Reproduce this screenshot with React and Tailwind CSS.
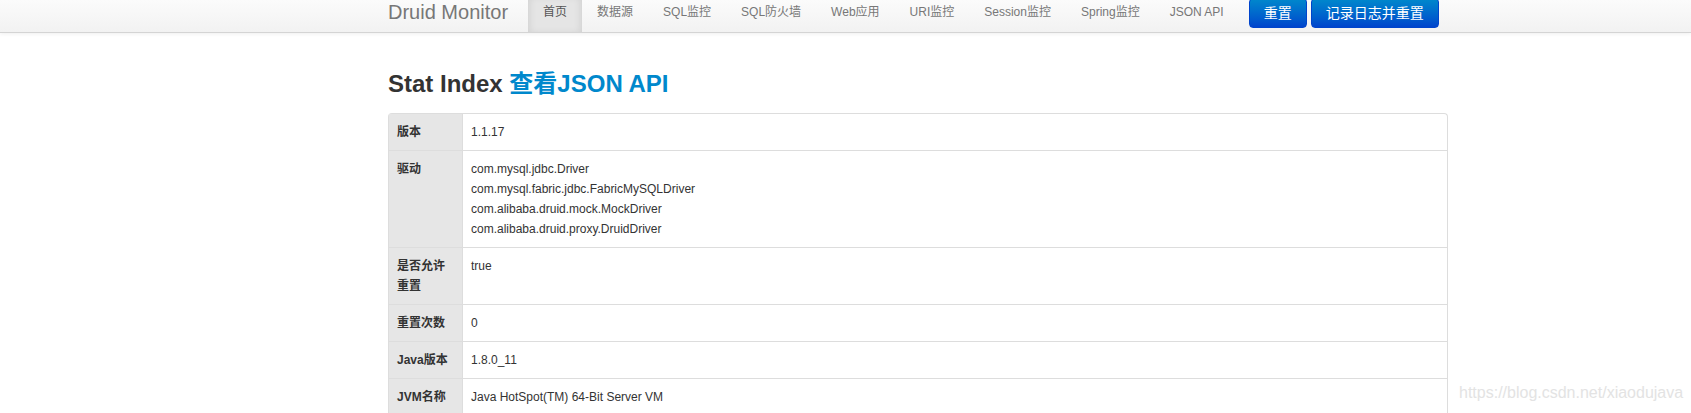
import React from "react";

const FONT = '"Liberation Sans", "Noto Sans CJK SC", sans-serif';

const navItems = ["首页", "数据源", "SQL监控", "SQL防火墙", "Web应用", "URI监控", "Session监控", "Spring监控", "JSON API"];

const rows = [
    { label: "版本", value: ["1.1.17"] },
    {
        label: "驱动",
        value: [
            "com.mysql.jdbc.Driver",
            "com.mysql.fabric.jdbc.FabricMySQLDriver",
            "com.alibaba.druid.mock.MockDriver",
            "com.alibaba.druid.proxy.DruidDriver",
        ],
    },
    { label: "是否允许重置", value: ["true"] },
    { label: "重置次数", value: ["0"] },
    { label: "Java版本", value: ["1.8.0_11"] },
    { label: "JVM名称", value: ["Java HotSpot(TM) 64-Bit Server VM"] },
];

const App = () => {
    return (
        <div className="relative h-[413px] overflow-hidden bg-white text-[12px] leading-5 text-[#333]" style={{ fontFamily: FONT }}>
            {/* Navbar */}
            <div className="relative z-10 h-[33px] overflow-hidden border-b border-[#d4d4d4] bg-linear-to-b from-[#fbfbfb] to-[#f2f2f2] shadow-[0_1px_4px_rgba(0,0,0,0.065)]">
                <div className="-mt-2 ml-[368px] flex h-10 items-start">
                    <a className="block px-5 py-[10px] text-[20px] leading-5 text-[#777]">Druid Monitor</a>
                    <ul className="flex">
                        {navItems.map((item, i) => (
                            <li key={item}>
                                <a
                                    className={
                                        i === 0
                                            ? "block bg-[#e5e5e5] px-[15px] py-[10px] leading-5 text-[#555] shadow-[inset_0_3px_8px_rgba(0,0,0,0.125)]"
                                            : "block px-[15px] py-[10px] leading-5 text-[#777]"
                                    }
                                >
                                    {item}
                                </a>
                            </li>
                        ))}
                    </ul>
                    <div className="ml-[10px] mt-[6px] flex gap-[4px]">
                        <button className="h-[30px] rounded border border-[#0044cc] bg-linear-to-b from-[#0088cc] to-[#0044cc] px-[14px] text-[14px] leading-5 text-white">
                            重置
                        </button>
                        <button className="h-[30px] rounded border border-[#0044cc] bg-linear-to-b from-[#0088cc] to-[#0044cc] px-[14px] text-[14px] leading-5 text-white">
                            记录日志并重置
                        </button>
                    </div>
                </div>
            </div>

            {/* Content */}
            <div className="ml-[388px] w-[1060px] pt-[31px]">
                <h3 className="mb-[9px] text-[24px] font-bold leading-[40px] text-[#333]">
                    Stat Index <a className="text-[#0088cc]">查看JSON API</a>
                </h3>
                <div className="rounded-t border border-b-0 border-[#ddd]">
                    {rows.map((row, i) => (
                        <div key={row.label} className={i === 0 ? "flex" : "flex border-t border-[#ddd]"}>
                            <div className="w-[73px] shrink-0 bg-[#e6e6e6] p-2 font-bold">{row.label}</div>
                            <div className="flex-1 border-l border-[#ddd] p-2">
                                {row.value.map((v) => (
                                    <div key={v}>{v}</div>
                                ))}
                            </div>
                        </div>
                    ))}
                </div>
            </div>

            {/* watermark */}
            <div className="absolute left-[1459px] top-[383px] text-[16px] leading-5 text-[#e3e3e3]">
                https://blog.csdn.net/xiaodujava
            </div>
        </div>
    );
};

export default App;
